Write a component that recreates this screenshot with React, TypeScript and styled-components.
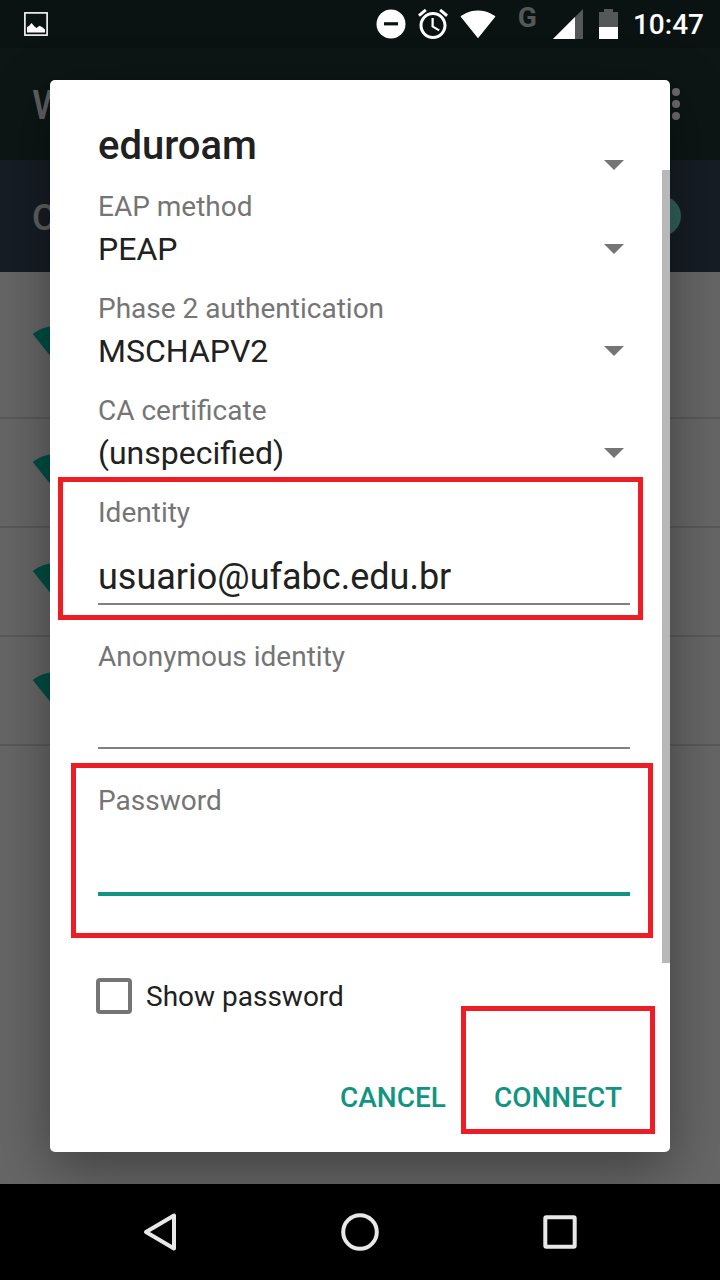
import React, { useState } from "react";
import styled, { createGlobalStyle } from "styled-components";

const teal = "#129482";
const grey = "#757575";
const ink = "#212121";
const markRed = "#ee1c24";

const GlobalStyle = createGlobalStyle`
  *, *::before, *::after { box-sizing: border-box; }
  body {
    margin: 0;
    background: #000;
    font-family: Roboto, "Liberation Sans", sans-serif;
  }
  button, input, select { font-family: inherit; }
`;

const Screen = styled.div`
  min-height: 100vh;
  display: flex;
  flex-direction: column;
`;

/* The settings page and the dialog share one grid cell, the dialog on top. */
const Stage = styled.div`
  flex: 1;
  display: grid;
  grid-template-columns: minmax(0, 1fr);
  overflow: hidden;
`;

const SettingsPage = styled.div`
  grid-area: 1 / 1;
  background: #666;
`;

const StatusBar = styled.header`
  height: 48px;
  padding: 0 16px 0 24px;
  display: flex;
  align-items: center;
  justify-content: space-between;
  background: #0b1212;
  color: #fff;
`;

const StatusIcons = styled.div`
  display: flex;
  align-items: center;
  gap: 12px;
`;

const Signal = styled.div`
  display: flex;
  align-items: flex-start;
  gap: 16px;
  padding-left: 10px;
`;

const NetworkType = styled.span`
  font-size: 28px;
  line-height: 20px;
  font-weight: 700;
  color: #555858;
`;

const Clock = styled.time`
  padding-top: 2px;
  font-size: 28px;
  line-height: 36px;
  font-weight: 500;
`;

const PageBar = styled.div<{ $bg: string }>`
  height: 112px;
  padding: 0 32px;
  display: flex;
  align-items: center;
  justify-content: space-between;
  background: ${(p) => p.$bg};
`;

const PageTitle = styled.span<{ $size: number }>`
  padding-top: 3px;
  color: #5f6161;
  font-size: ${(p) => p.$size}px;
  font-weight: 500;
`;

const IconButton = styled.button<{ $color: string }>`
  display: flex;
  border: 0;
  padding: 0;
  background: none;
  color: ${(p) => p.$color};
`;

const Toggle = styled.input`
  appearance: none;
  margin: 0 7px;
  width: 40px;
  height: 40px;
  border-radius: 50%;
  background: #30625a;
`;

const NetworkList = styled.ul`
  margin: 0;
  padding: 0;
  list-style: none;
`;

const Network = styled.li`
  height: 109px;
  padding: 0 32px 2px;
  display: flex;
  align-items: center;
  border-bottom: 2px solid #595959;
  color: #004d42;
  &:first-child { height: 147px; }
`;

const Overlay = styled.div`
  grid-area: 1 / 1;
  padding: 80px 50px 32px;
`;

const Dialog = styled.form`
  border-radius: 5px;
  background: #fff;
  color: ${ink};
  box-shadow: 0 16px 56px rgba(0, 0, 0, 0.38);
`;

const DialogHead = styled.div`
  padding: 42px 46px 0 48px;
  display: flex;
  align-items: flex-end;
  justify-content: space-between;
`;

const Title = styled.h1`
  margin: 0;
  font-size: 40px;
  line-height: 48px;
  font-weight: 500;
`;

const ScrollArea = styled.div`
  position: relative;
`;

const ScrollThumb = styled.div`
  position: absolute;
  top: 0;
  right: 0;
  width: 8px;
  height: 89%;
  background: #b8b8b8;
`;

const Fields = styled.div`
  padding: 19px 40px 0 48px;
`;

const FieldBox = styled.div<{ $gap: number }>`
  position: relative;
  margin-bottom: ${(p) => p.$gap}px;
`;

const Label = styled.label`
  display: block;
  font-size: 28px;
  line-height: 36px;
  color: ${grey};
`;

const SelectRow = styled.div`
  display: grid;
  grid-template-columns: minmax(0, 1fr);
  align-items: center;
  justify-items: end;
  padding: 0 6px 0 0;
  & > svg { grid-area: 1 / 1; pointer-events: none; }
`;

const Select = styled.select`
  grid-area: 1 / 1;
  appearance: none;
  width: 100%;
  height: 48px;
  padding: 0;
  border: 0;
  background: transparent;
  color: ${ink};
  font-size: 32px;
`;

const TextInput = styled.input<{ $active?: boolean }>`
  display: block;
  width: 100%;
  height: ${(p) => (p.$active ? 77 : 74)}px;
  padding: 25px 0 5px;
  border: 0;
  border-bottom: ${(p) => (p.$active ? `4px solid ${teal}` : "2px solid #808080")};
  border-radius: 0;
  outline: 0;
  background: transparent;
  color: ${ink};
  font-size: 36px;
  line-height: 42px;
`;

/* Red tutorial frame around the part that the reader has to fill in or press. */
const Mark = styled.span<{ $inset: string }>`
  position: absolute;
  inset: ${(p) => p.$inset};
  border: 5px solid ${markRed};
  pointer-events: none;
`;

const CheckRow = styled.label`
  padding: 47px 46px 46px;
  display: flex;
  align-items: center;
  gap: 14px;
  font-size: 28px;
  line-height: 36px;
`;

const CheckText = styled.span`
  padding-top: 2px;
`;

const CheckBox = styled.input`
  appearance: none;
  margin: 0;
  width: 36px;
  height: 36px;
  border: 4px solid ${grey};
  border-radius: 4px;
  &:checked { background: ${teal}; border-color: ${teal}; }
`;

const Actions = styled.div`
  padding: 0 24px 19px;
  display: flex;
  justify-content: flex-end;
`;

const Action = styled.button`
  position: relative;
  height: 72px;
  padding: 0 24px;
  border: 0;
  background: none;
  color: ${teal};
  font-size: 28px;
  font-weight: 500;
`;

const NavBar = styled.nav`
  height: 96px;
  padding: 0 60px;
  display: grid;
  grid-template-columns: repeat(3, 1fr);
  place-items: center;
  background: #000;
`;

const WifiIcon = ({ size }: { size: number }) => (
  <svg width={size} height={size} viewBox="0 0 24 24" fill="currentColor" aria-hidden="true">
    <path d="M12.01 21.49L23.64 7c-.45-.34-4.93-4-11.64-4C5.28 3 .81 6.66.36 7l11.63 14.49.01.01.01-.01z" />
  </svg>
);

const Caret = () => (
  <svg width="20" height="10" viewBox="0 0 20 10" aria-hidden="true">
    <path d="M0 0H20L10 10Z" fill={grey} />
  </svg>
);

const PictureIcon = () => (
  <svg width="24" height="24" viewBox="0 0 24 24" aria-hidden="true">
    <rect x="0.9" y="0.9" width="22.2" height="22.2" fill="none" stroke="#fff" strokeWidth="1.6" />
    <path d="M3 20.5V15l2-1 2.500-3 3 3.500 2 1.500 3-2.200 2.500 1.200 3 2.500v3z" fill="#fff" />
  </svg>
);

const DndIcon = () => (
  <svg width="30" height="30" viewBox="0 0 30 30" aria-hidden="true">
    <circle cx="15" cy="15" r="14.500" fill="#fff" />
    <rect x="8" y="13.200" width="14" height="3.200" fill="#0b1212" />
  </svg>
);

const AlarmIcon = () => (
  <svg width="30" height="30" viewBox="2 2 20 20" fill="#fff" aria-hidden="true">
    <path d="M22 5.720l-4.600-3.860-1.290 1.530 4.600 3.860L22 5.720zM7.880 3.390L6.600 1.860 2 5.710l1.290 1.530 4.590-3.850zM12.500 8H11v6l4.750 2.850.75-1.230-4-2.370V8zM12 4c-4.970 0-9 4.030-9 9s4.020 9 9 9c4.970 0 9-4.030 9-9s-4.030-9-9-9zm0 16c-3.870 0-7-3.130-7-7s3.130-7 7-7 7 3.130 7 7-3.130 7-7 7z" />
  </svg>
);

const CellIcon = () => (
  <svg width="30" height="32" viewBox="0 0 30 32" aria-hidden="true">
    <path d="M30 1V31H0Z" fill="#555858" />
    <path d="M22 9V31H0Z" fill="#fff" />
  </svg>
);

const BatteryIcon = () => (
  <svg width="26" height="30" viewBox="0 0 26 30" aria-hidden="true">
    <path d="M4 3H9V0H18V3H23V18H4Z" fill="#555858" />
    <path d="M4 18H23V30H4Z" fill="#fff" />
  </svg>
);

interface PickProps {
  id: string;
  label: string;
  options: string[];
}

const PickField = ({ id, label, options }: PickProps) => (
  <FieldBox $gap={18}>
    <Label htmlFor={id}>{label}</Label>
    <SelectRow>
      <Select id={id}>
        {options.map((option) => (
          <option key={option}>{option}</option>
        ))}
      </Select>
      <Caret />
    </SelectRow>
  </FieldBox>
);

export default function App() {
  const [identity, setIdentity] = useState("usuario@ufabc.edu.br");
  const [anonymous, setAnonymous] = useState("");
  const [password, setPassword] = useState("");
  const [shown, setShown] = useState(false);

  return (
    <Screen>
      <GlobalStyle />
      <Stage>
        <SettingsPage>
          <StatusBar>
            <PictureIcon />
            <StatusIcons>
              <DndIcon />
              <AlarmIcon />
              <WifiIcon size={36} />
              <Signal>
                <NetworkType>G</NetworkType>
                <CellIcon />
              </Signal>
              <BatteryIcon />
              <Clock>10:47</Clock>
            </StatusIcons>
          </StatusBar>
          <PageBar $bg="#0d1615">
            <PageTitle $size={40}>Wi-Fi</PageTitle>
            <IconButton type="button" $color="#6b6c6c" aria-label="More options">
              <svg width="24" height="32" viewBox="0 0 24 32" fill="currentColor" aria-hidden="true">
                <circle cx="12" cy="4" r="4" />
                <circle cx="12" cy="16" r="4" />
                <circle cx="12" cy="28" r="4" />
              </svg>
            </IconButton>
          </PageBar>
          <PageBar $bg="#171d25">
            <PageTitle $size={36}>On</PageTitle>
            <Toggle type="checkbox" aria-label="Wi-Fi" defaultChecked />
          </PageBar>
          <NetworkList>
            {[1, 2, 3, 4].map((n) => (
              <Network key={n}>
                <WifiIcon size={48} />
              </Network>
            ))}
          </NetworkList>
        </SettingsPage>

        <Overlay>
          <Dialog role="dialog" aria-labelledby="dialog-title" onSubmit={(e) => e.preventDefault()}>
            <DialogHead>
              <Title id="dialog-title">eduroam</Title>
              <Caret />
            </DialogHead>
            <ScrollArea>
              <Fields>
                <PickField id="eap" label="EAP method" options={["PEAP"]} />
                <PickField id="phase2" label="Phase 2 authentication" options={["MSCHAPV2"]} />
                <PickField id="ca" label="CA certificate" options={["(unspecified)"]} />
                <FieldBox $gap={34}>
                  <Label htmlFor="identity">Identity</Label>
                  <TextInput
                    id="identity"
                    spellCheck={false}
                    value={identity}
                    onChange={(e) => setIdentity(e.target.value)}
                  />
                  <Mark $inset="-18px -13px -15px -40px" />
                </FieldBox>
                <FieldBox $gap={34}>
                  <Label htmlFor="anonymous">Anonymous identity</Label>
                  <TextInput
                    id="anonymous"
                    value={anonymous}
                    onChange={(e) => setAnonymous(e.target.value)}
                  />
                </FieldBox>
                <FieldBox $gap={34}>
                  <Label htmlFor="password">Password</Label>
                  <TextInput
                    id="password"
                    $active
                    type={shown ? "text" : "password"}
                    value={password}
                    onChange={(e) => setPassword(e.target.value)}
                  />
                  <Mark $inset="-20px -23px -42px -27px" />
                </FieldBox>
              </Fields>
              <CheckRow>
                <CheckBox
                  type="checkbox"
                  checked={shown}
                  onChange={(e) => setShown(e.target.checked)}
                />
                <CheckText>Show password</CheckText>
              </CheckRow>
              <ScrollThumb />
            </ScrollArea>
            <Actions>
              <Action type="button">CANCEL</Action>
              <Action type="submit">
                CONNECT
                <Mark $inset="-55px -9px -1px -9px" />
              </Action>
            </Actions>
          </Dialog>
        </Overlay>
      </Stage>

      <NavBar>
        <IconButton type="button" $color="#e8e8e8" aria-label="Back">
          <svg width="40" height="40" viewBox="0 0 40 40" aria-hidden="true">
            <path d="M34 3.500V36.500L6 20Z" fill="none" stroke="currentColor" strokeWidth="4" strokeLinejoin="round" />
          </svg>
        </IconButton>
        <IconButton type="button" $color="#e8e8e8" aria-label="Home">
          <svg width="40" height="40" viewBox="0 0 40 40" aria-hidden="true">
            <circle cx="20" cy="20" r="16.800" fill="none" stroke="currentColor" strokeWidth="4" />
          </svg>
        </IconButton>
        <IconButton type="button" $color="#e8e8e8" aria-label="Recent apps">
          <svg width="40" height="40" viewBox="0 0 40 40" aria-hidden="true">
            <rect x="5.300" y="5.300" width="29.400" height="29.400" rx="1" fill="none" stroke="currentColor" strokeWidth="4" />
          </svg>
        </IconButton>
      </NavBar>
    </Screen>
  );
}
